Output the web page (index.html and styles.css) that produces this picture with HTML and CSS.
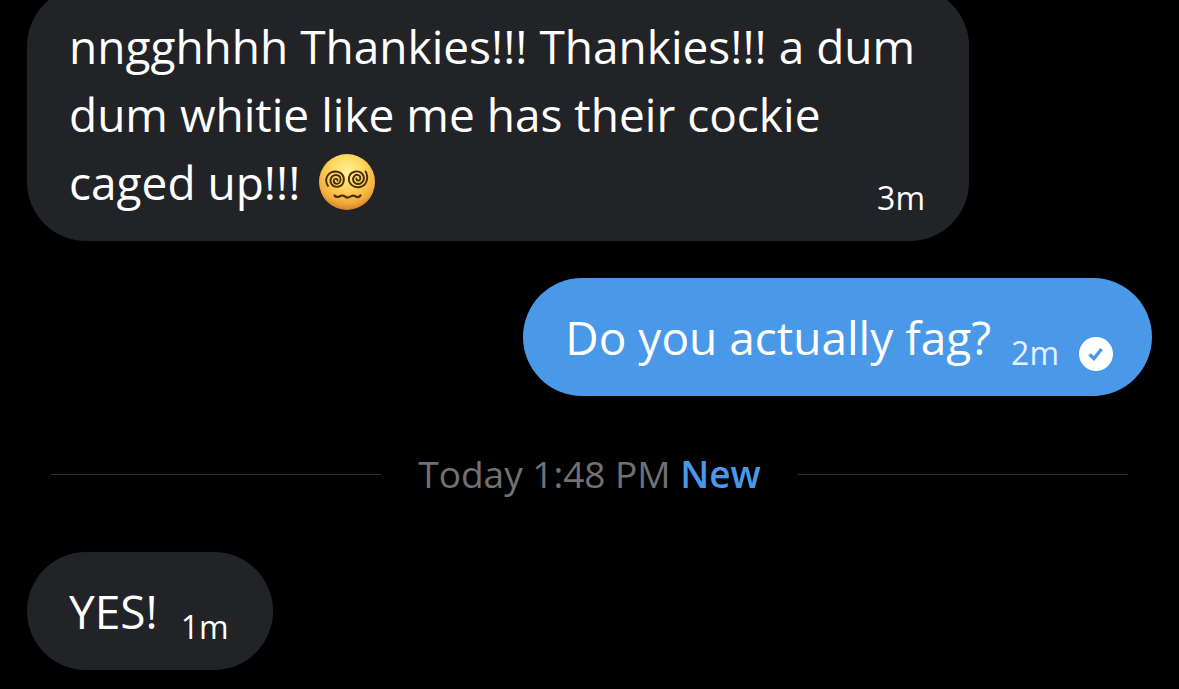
FILE: index.html
```html
<!DOCTYPE html>
<html lang="en">
<head>
<meta charset="utf-8">
<meta name="viewport" content="width=device-width, initial-scale=1">
<title>Messages</title>
<link rel="stylesheet" href="styles.css">
</head>
<body>
<main class="thread">
  <article class="bubble bubble-received bubble-long">
    <div class="message">nngghhhh Thankies!!! Thankies!!! a dum dum whitie like me has their cockie caged up!!! <svg class="emoji" viewBox="0 0 56 56" role="img" aria-label="Face with spiral eyes">
      <defs>
        <radialGradient id="face" cx="50%" cy="32%" r="68%">
          <stop offset="0" stop-color="#fff394"/>
          <stop offset="0.45" stop-color="#fcd75c"/>
          <stop offset="0.8" stop-color="#f3ae3c"/>
          <stop offset="1" stop-color="#d98226"/>
        </radialGradient>
      </defs>
      <circle cx="28" cy="28" r="28" fill="url(#face)"/>
      <g fill="none" stroke="#4f2b08" stroke-width="1.9" stroke-linecap="round" stroke-linejoin="round">
        <path d="M9 32C5 26 8 18 16 17.500C23 17.500 26 23 24.500 28C23 33.500 15.500 34.500 12.500 30C10 26 12.500 21 17 21C21 21 23 25 20.500 28.500C18.500 31 14.500 29.500 14.800 26.500C15.200 24 18.500 24 18.500 26.500"/>
        <path d="M46.500 17.500C50 23 48 31.500 41 33C34 34.500 29 29 30 23.500C31.200 17.500 39 15.500 43 19.500C47 24 44 30 39 30C34.500 30 32.500 25 35.500 22C38 19.500 42 21.500 41.200 25C40.500 27.500 37 27 37.500 24.500"/>
        <path stroke-width="2.2" d="M15.500 41.500C18 44.500 20 42.500 22 41.700C25 40.500 26.500 44 29 43.500C32 43 33 40.500 36 42C38 43.500 40 43.500 41.500 41.500"/>
      </g>
    </svg><time class="stamp">3m</time></div>
  </article>

  <article class="bubble bubble-sent">
    <p class="message">Do you actually fag?</p>
    <time class="stamp">2m</time>
    <svg class="status" viewBox="0 0 34 34" role="img" aria-label="Sent">
      <circle cx="17" cy="17" r="17" fill="#fff"/>
      <path d="M10.500 17.500L15 21.500L22.500 12" fill="none" stroke="#4a99e9" stroke-width="3.4"/>
    </svg>
  </article>

  <div class="divider">
    <p class="divider-text">Today 1:48 PM <strong class="divider-new">New</strong></p>
  </div>

  <article class="bubble bubble-received">
    <p class="message">YES!</p>
    <time class="stamp">1m</time>
  </article>
</main>
</body>
</html>
```
FILE: styles.css
```css
* {
  box-sizing: border-box;
}

body {
  margin: 0;
  background: #000;
  color: #fff;
  font-family: "Open Sans", "Noto Sans", sans-serif;
  overflow: hidden;
}

.thread {
  display: flex;
  flex-direction: column;
  align-items: flex-start;
  margin-top: -13px;
  padding: 0 27px;
}

.bubble {
  display: flex;
  align-items: flex-end;
  gap: 23px;
  padding: 25px 44px 25px 42px;
  border-radius: 59px;
}

.bubble-received {
  background: #222327;
}

.bubble-long {
  width: 942px;
  max-width: 100%;
}

.bubble-long .message {
  flex: 1;
}

.bubble-long .stamp {
  float: right;
  margin-top: 32px;
}

.bubble-sent {
  align-self: flex-end;
  gap: 20px;
  margin-top: 37px;
  padding-right: 39px;
  background: #4a99e9;
}

.message {
  margin: 0;
  font-size: 46px;
  line-height: 68px;
}

.emoji {
  width: 56px;
  height: 56px;
  margin-left: 7px;
  vertical-align: -10px;
}

.stamp {
  font-size: 32px;
  line-height: 36px;
}

.bubble-sent .stamp {
  color: #e4f0fc;
}

.status {
  width: 34px;
  height: 34px;
}

.divider {
  display: flex;
  align-items: center;
  align-self: stretch;
  gap: 37px;
  height: 156px;
  padding: 0 24px;
}

.divider::before,
.divider::after {
  content: "";
  flex: 1;
  height: 1px;
  background: #2f3336;
}

.divider-text {
  margin: 0;
  color: #707175;
  font-size: 37px;
  line-height: 48px;
}

.divider-new {
  color: #4a99e9;
  font-weight: 600;
}
```
